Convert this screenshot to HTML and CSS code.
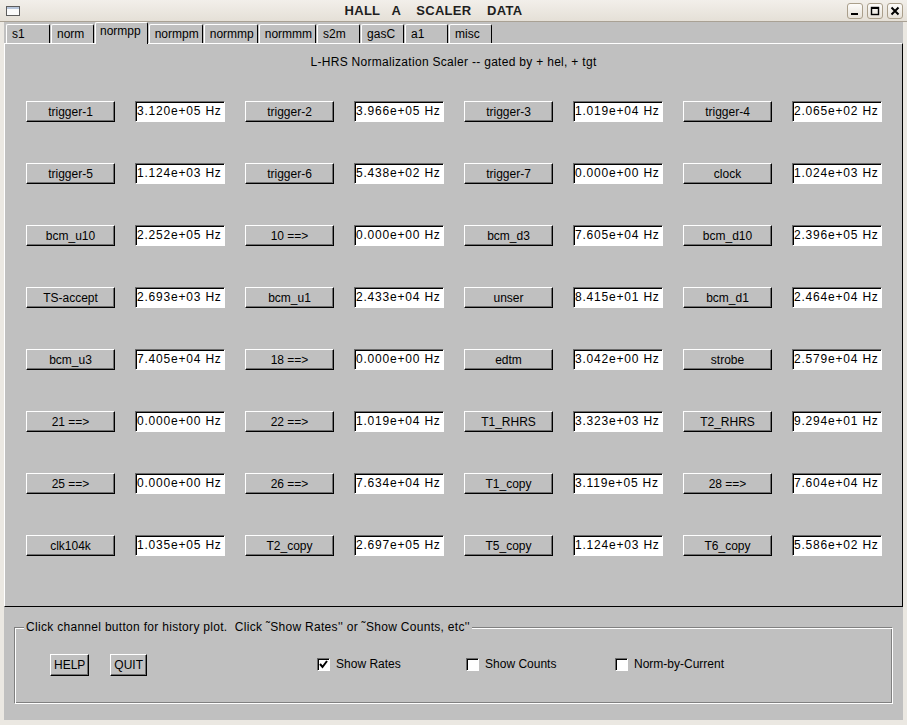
FILE: index.html
```html
<!DOCTYPE html>
<html lang="en">
<head>
  <meta charset="UTF-8">
  <title>HALL A SCALER DATA</title>
  <link rel="stylesheet" href="styles.css">
</head>
<body>
<div class="window">
  <header class="titlebar">
    <svg class="app-icon" width="14" height="10" viewBox="0 0 14 10">
      <rect x="0.5" y="0.5" width="13" height="9" fill="#fbfbfb" stroke="#5d5d5d"/>
      <rect x="1" y="1" width="12" height="2" fill="#b9c7dc"/>
    </svg>
    <div class="title">HALL   A    SCALER    DATA</div>
    <div class="wm-buttons">
      <span class="wm-btn"><svg width="10" height="10" viewBox="0 0 10 10"><rect x="1" y="7" width="7" height="2" fill="#000"/></svg></span>
      <span class="wm-btn"><svg width="10" height="10" viewBox="0 0 10 10"><rect x="1.5" y="1.5" width="7" height="7" fill="none" stroke="#000" stroke-width="1.4"/><rect x="1" y="1" width="8" height="2" fill="#000"/></svg></span>
      <span class="wm-btn"><svg width="10" height="10" viewBox="0 0 10 10"><path d="M1.5 1.5 L8.5 8.5 M8.5 1.5 L1.5 8.5" stroke="#000" stroke-width="2"/></svg></span>
    </div>
  </header>

  <div class="frame">
    <nav class="tabs">
      <span class="tab">s1</span>
      <span class="tab">norm</span>
      <span class="tab active">normpp</span>
      <span class="tab">normpm</span>
      <span class="tab">normmp</span>
      <span class="tab">normmm</span>
      <span class="tab">s2m</span>
      <span class="tab">gasC</span>
      <span class="tab">a1</span>
      <span class="tab">misc</span>
    </nav>

    <section class="page">
      <h1 class="heading">L-HRS Normalization Scaler -- gated by + hel, + tgt</h1>
      <div class="grid">
        <button class="chan">trigger-1</button><span class="rate">3.120e+05 Hz</span>
        <button class="chan">trigger-2</button><span class="rate">3.966e+05 Hz</span>
        <button class="chan">trigger-3</button><span class="rate">1.019e+04 Hz</span>
        <button class="chan">trigger-4</button><span class="rate">2.065e+02 Hz</span>

        <button class="chan">trigger-5</button><span class="rate">1.124e+03 Hz</span>
        <button class="chan">trigger-6</button><span class="rate">5.438e+02 Hz</span>
        <button class="chan">trigger-7</button><span class="rate">0.000e+00 Hz</span>
        <button class="chan">clock</button><span class="rate">1.024e+03 Hz</span>

        <button class="chan">bcm_u10</button><span class="rate">2.252e+05 Hz</span>
        <button class="chan">10 ==&gt;</button><span class="rate">0.000e+00 Hz</span>
        <button class="chan">bcm_d3</button><span class="rate">7.605e+04 Hz</span>
        <button class="chan">bcm_d10</button><span class="rate">2.396e+05 Hz</span>

        <button class="chan">TS-accept</button><span class="rate">2.693e+03 Hz</span>
        <button class="chan">bcm_u1</button><span class="rate">2.433e+04 Hz</span>
        <button class="chan">unser</button><span class="rate">8.415e+01 Hz</span>
        <button class="chan">bcm_d1</button><span class="rate">2.464e+04 Hz</span>

        <button class="chan">bcm_u3</button><span class="rate">7.405e+04 Hz</span>
        <button class="chan">18 ==&gt;</button><span class="rate">0.000e+00 Hz</span>
        <button class="chan">edtm</button><span class="rate">3.042e+00 Hz</span>
        <button class="chan">strobe</button><span class="rate">2.579e+04 Hz</span>

        <button class="chan">21 ==&gt;</button><span class="rate">0.000e+00 Hz</span>
        <button class="chan">22 ==&gt;</button><span class="rate">1.019e+04 Hz</span>
        <button class="chan">T1_RHRS</button><span class="rate">3.323e+03 Hz</span>
        <button class="chan">T2_RHRS</button><span class="rate">9.294e+01 Hz</span>

        <button class="chan">25 ==&gt;</button><span class="rate">0.000e+00 Hz</span>
        <button class="chan">26 ==&gt;</button><span class="rate">7.634e+04 Hz</span>
        <button class="chan">T1_copy</button><span class="rate">3.119e+05 Hz</span>
        <button class="chan">28 ==&gt;</button><span class="rate">7.604e+04 Hz</span>

        <button class="chan">clk104k</button><span class="rate">1.035e+05 Hz</span>
        <button class="chan">T2_copy</button><span class="rate">2.697e+05 Hz</span>
        <button class="chan">T5_copy</button><span class="rate">1.124e+03 Hz</span>
        <button class="chan">T6_copy</button><span class="rate">5.586e+02 Hz</span>
      </div>
    </section>

    <footer class="bottom">
      <fieldset class="group">
        <legend>Click channel button for history plot.  Click ˜Show Rates'' or ˜Show Counts, etc''</legend>
        <div class="controls">
          <button class="cmd">HELP</button>
          <button class="cmd quit">QUIT</button>
          <div class="checks">
            <label class="check"><span class="box"><svg width="9" height="9" viewBox="0 0 9 9"><path d="M1 4 L3.5 7 L8 1" fill="none" stroke="#000" stroke-width="2"/></svg></span>Show Rates</label>
            <label class="check"><span class="box"></span>Show Counts</label>
            <label class="check"><span class="box"></span>Norm-by-Current</label>
          </div>
        </div>
      </fieldset>
    </footer>
  </div>
</div>
</body>
</html>
```

FILE: styles.css
```css
body {
  margin: 0;
  background: #ebe8e2;
  font: 12px "Liberation Sans", Arial, sans-serif;
  color: #000;
}

.window {
  width: 907px;
  height: 725px;
  display: flex;
  flex-direction: column;
}

/* window manager title bar */
.titlebar {
  height: 21px;
  border-bottom: 1px solid #a9a194;
  background: linear-gradient(#f2efea, #e5e0d7);
  display: flex;
  align-items: center;
  padding: 0 4px 0 6px;
}

.app-icon {
  flex: none;
}

.title {
  flex: 1;
  text-align: center;
  font-weight: bold;
  font-size: 13px;
  letter-spacing: 0.3px;
  white-space: pre;
  color: #1e1e1e;
}

.wm-buttons {
  display: flex;
  gap: 4px;
}

.wm-btn {
  width: 16px;
  height: 16px;
  box-sizing: border-box;
  border: 1px solid #aa9f8b;
  border-radius: 3px;
  background: linear-gradient(#fdfcfa, #e7e2d9);
  display: flex;
  align-items: center;
  justify-content: center;
}

/* tk frame */
.frame {
  flex: 1;
  margin: 0 4px 5px;
  background: #c0c0c0;
  display: flex;
  flex-direction: column;
}

.tabs {
  display: flex;
  align-items: flex-end;
  height: 21px;
  padding-left: 2px;
  gap: 1px;
}

.tab {
  box-sizing: border-box;
  height: 19px;
  min-width: 43px;
  padding: 0 3px 0 5px;
  border: 1px solid;
  border-color: #fff #000 transparent #fff;
  border-bottom: none;
  border-radius: 2px 2px 0 0;
  line-height: 19px;
}

.tab:first-child {
  min-width: 44px;
}

.tab.active {
  position: relative;
  z-index: 1;
  height: 22px;
  margin-bottom: -1px;
  padding: 0 6px 0 4px;
  line-height: 16px;
  background: #c0c0c0;
}

.page {
  box-sizing: border-box;
  height: 564px;
  border: 1px solid;
  border-color: #fff #000 #000 #fff;
  padding-top: 11px;
}

.heading {
  margin: 0;
  font-size: 12px;
  font-weight: normal;
  line-height: 14px;
  letter-spacing: 0.3px;
  text-align: center;
}

.grid {
  display: grid;
  grid-template-columns: repeat(4, 89px 90px);
  grid-auto-rows: 21px;
  column-gap: 20px;
  row-gap: 41px;
  margin: 32px 0 0 21px;
}

.chan,
.cmd {
  box-sizing: border-box;
  margin: 0;
  padding: 0;
  font: inherit;
  color: #000;
  background: #c0c0c0;
  border: 1px solid;
  border-color: #fff #000 #000 #fff;
  box-shadow: inset -1px -1px 0 #707070;
}

.rate {
  box-sizing: border-box;
  background: #fff;
  border: 1px solid;
  border-color: #6a6a6a #fff #fff #6a6a6a;
  box-shadow: inset 1px 1px 0 #000;
  padding-left: 1px;
  line-height: 19px;
  white-space: pre;
  letter-spacing: 0.8px;
}

/* bottom group */
.bottom {
  flex: 1;
  padding: 13px 10px 0;
}

.group {
  margin: 0;
  padding: 0;
  border: 1px solid;
  border-color: #808080 #fff #fff #808080;
  box-shadow: inset 1px 1px 0 #fff, inset -1px -1px 0 #808080;
}

.group legend {
  margin-left: 9px;
  padding: 0 2px;
  line-height: 14px;
  letter-spacing: 0.3px;
  white-space: pre;
  background: #c0c0c0;
}

.controls {
  box-sizing: border-box;
  height: 69px;
  padding: 20px 0 0 35px;
  display: flex;
  align-items: flex-start;
}

.cmd {
  height: 22px;
  padding: 0 3px;
}

.quit {
  margin-left: 21px;
}

.checks {
  display: flex;
  margin: 4px 0 0 170px;
}

.check {
  width: 149px;
  display: flex;
  align-items: center;
  line-height: 13px;
}

.box {
  box-sizing: border-box;
  width: 13px;
  height: 13px;
  margin-right: 6px;
  background: #fff;
  border: 1px solid;
  border-color: #6a6a6a #fff #fff #6a6a6a;
  box-shadow: inset 1px 1px 0 #000;
  display: flex;
  align-items: center;
  justify-content: center;
}
```
